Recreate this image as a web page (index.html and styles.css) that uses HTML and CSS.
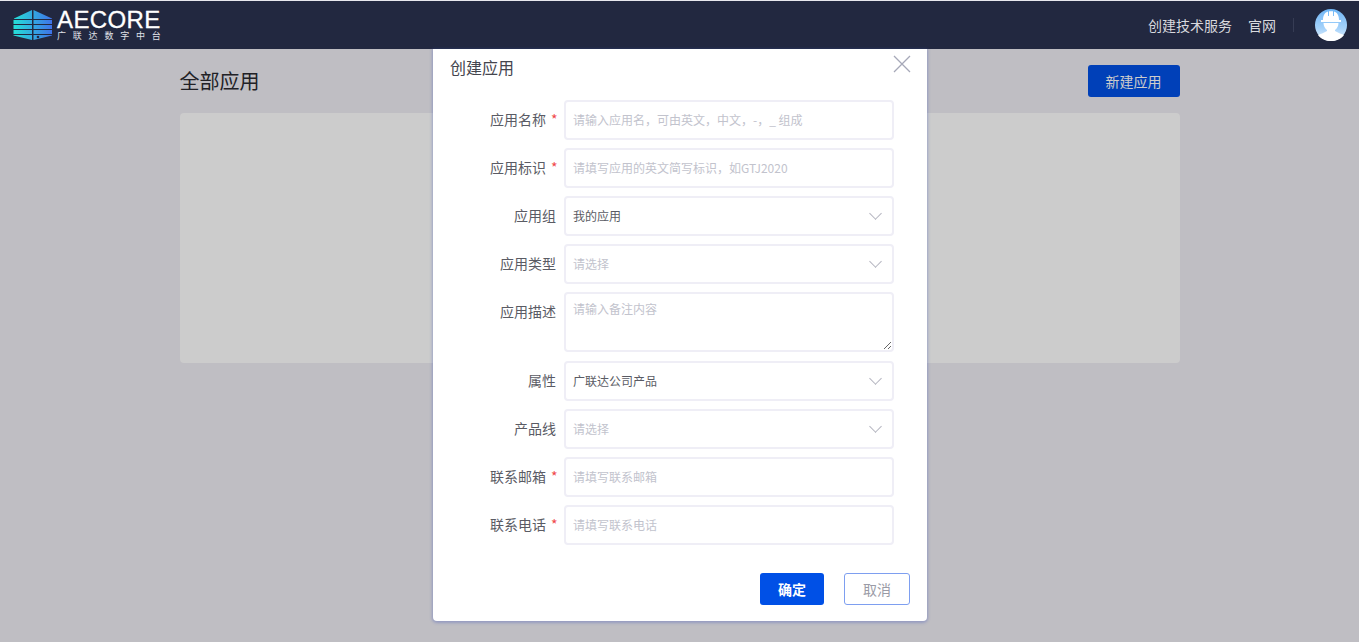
FILE: index.html
```html
<!DOCTYPE html>
<html>
<head>
  <meta charset="utf-8">
  <meta name="viewport" content="width=device-width, initial-scale=1">
  <title>全部应用</title>
  <link rel="stylesheet" href="styles.css">
</head>
<body>
  <header class="topbar">
    <div class="logo">
      <svg class="logo-icon" width="40" height="30" viewBox="0 0 40 30">
        <defs>
          <linearGradient id="logoFill" x1="0" y1="0" x2="1" y2="0">
            <stop offset="0" stop-color="#25dfd8"/>
            <stop offset="1" stop-color="#3f72e8"/>
          </linearGradient>
        </defs>
        <path fill="url(#logoFill)" d="M19 0V9H1V8.500ZM20.500 0 39 8.500V9H20.500ZM0.500 10H19V14H0.500ZM20.500 10H39V14H20.500ZM0.500 15H19V19H0.500ZM20.500 15H39V19H20.500ZM0.500 20H19V24H0.500ZM20.500 20H39V24H20.500ZM0.500 25H19V30L0.500 25.500ZM20.500 25H39V25.500L20.500 30Z"/>
        <circle cx="25" cy="27" r="1.300" fill="#222840"/>
      </svg>
      <div class="logo-text">
        <div class="logo-name">AECORE</div>
        <div class="logo-sub">广联达数字中台</div>
      </div>
    </div>
    <nav class="topnav">
      <a>创建技术服务</a>
      <a>官网</a>
      <span class="topnav-sep"></span>
      <svg class="avatar" width="32" height="32" viewBox="0 0 32 32">
        <defs>
          <linearGradient id="avatarFill" x1="0" y1="0" x2="0" y2="1">
            <stop offset="0" stop-color="#6fb6f6"/>
            <stop offset="0.6" stop-color="#a5d2fa"/>
            <stop offset="1" stop-color="#e4f1fd"/>
          </linearGradient>
        </defs>
        <circle cx="16" cy="16" r="16" fill="url(#avatarFill)"/>
        <path fill="#fff" d="M8 11C8 6 10 3.500 13 2.500V7H14V2.200H18V7H19V2.500C22 3.500 24 6 24 11H26V13H6V11Z"/>
        <path fill="#fff" d="M8.500 14H23.500C23.500 17 22 19.500 20 21V22C23 24 27 25 29 26C26 30 21 32 16 32S6 30 3 26C5 25 9 24 12 22V21C10 19.500 8.500 17 8.500 14Z"/>
      </svg>
    </nav>
  </header>

  <main class="content">
    <div class="content-head">
      <h1>全部应用</h1>
      <button class="new-button">新建应用</button>
    </div>
    <div class="app-list"></div>
  </main>

  <div class="mask">
    <div class="dialog">
      <div class="dialog-head">
        <span class="dialog-title">创建应用</span>
        <svg class="dialog-close" width="18" height="18" viewBox="0 0 18 18">
          <path d="M1 1 17 17M17 1 1 17" stroke="#a6a8b8" stroke-width="1.300" fill="none"/>
        </svg>
      </div>
      <form class="form">
        <div class="form-row">
          <label class="required">应用名称</label>
          <input class="field" placeholder="请输入应用名，可由英文，中文，-，_ 组成">
        </div>
        <div class="form-row">
          <label class="required">应用标识</label>
          <input class="field" placeholder="请填写应用的英文简写标识，如GTJ2020">
        </div>
        <div class="form-row">
          <label>应用组</label>
          <div class="field select">我的应用</div>
        </div>
        <div class="form-row">
          <label>应用类型</label>
          <div class="field select empty">请选择</div>
        </div>
        <div class="form-row">
          <label>应用描述</label>
          <textarea class="field area" placeholder="请输入备注内容"></textarea>
        </div>
        <div class="form-row">
          <label>属性</label>
          <div class="field select">广联达公司产品</div>
        </div>
        <div class="form-row">
          <label>产品线</label>
          <div class="field select empty">请选择</div>
        </div>
        <div class="form-row">
          <label class="required">联系邮箱</label>
          <input class="field" placeholder="请填写联系邮箱">
        </div>
        <div class="form-row">
          <label class="required">联系电话</label>
          <input class="field" placeholder="请填写联系电话">
        </div>
      </form>
      <div class="dialog-foot">
        <button class="ok-button">确定</button>
        <button class="cancel-button">取消</button>
      </div>
    </div>
  </div>
</body>
</html>
```

FILE: styles.css
```css
* {
  box-sizing: border-box;
}
html, body {
  height: 100%;
}
body {
  margin: 0;
  position: relative;
  overflow: hidden;
  background: #efeef4;
  font-family: "Noto Sans CJK SC", "Liberation Sans", sans-serif;
}
.topbar {
  height: 49px;
  border-top: 1px solid #e8e8ee;
  background: #222840;
  display: flex;
  align-items: center;
  justify-content: space-between;
  padding: 0 12px 0 13px;
}
.logo {
  display: flex;
  align-items: center;
  gap: 4px;
}
.logo-text {
  color: #fff;
  width: 106px;
}
.logo-name {
  font-family: "Liberation Sans", sans-serif;
  font-size: 24px;
  line-height: 20px;
  letter-spacing: 0.4px;
  -webkit-text-stroke: 0.3px #fff;
}
.logo-sub {
  font-size: 9px;
  line-height: 11px;
  letter-spacing: 6.8px;
  white-space: nowrap;
  color: #e0e2e8;
}
.topnav {
  display: flex;
  align-items: center;
  font-size: 14px;
  color: #d8d9de;
}
.topnav a {
  margin-right: 16px;
}
.topnav-sep {
  width: 1px;
  height: 14px;
  background: #363c54;
  margin-left: 1px;
  margin-right: 21px;
}
.content {
  width: 1000px;
  margin: 0 auto;
}
.content-head {
  height: 64px;
  display: flex;
  align-items: center;
  justify-content: space-between;
}
.content-head h1 {
  margin: 0 0 2px;
  font-size: 20px;
  font-weight: 400;
  color: #2a2a30;
}
.new-button {
  width: 92px;
  height: 32px;
  border: 0;
  border-radius: 3px;
  background: #0050e6;
  color: #fff;
  font: inherit;
  font-size: 14px;
}
.app-list {
  height: 250px;
  border-radius: 4px;
  background: #fff;
}
.mask {
  position: absolute;
  top: 49px;
  left: 0;
  right: 0;
  bottom: 0;
  background: rgba(0, 0, 0, 0.2);
  display: flex;
  justify-content: center;
  padding-left: 1px;
}
.dialog {
  width: 494px;
  height: 572px;
  background: #fff;
  border-radius: 0 0 4px 4px;
  box-shadow: 0 1px 3px 1px rgba(70, 90, 190, 0.35);
  display: flex;
  flex-direction: column;
}
.dialog-head {
  height: 51px;
  display: flex;
  justify-content: space-between;
  padding: 6px 16px 0 17px;
}
.dialog-title {
  font-size: 16px;
  line-height: 24px;
  color: #44454e;
}
.form {
  display: flex;
  flex-direction: column;
  gap: 8px;
  padding-right: 32px;
}
.form-row {
  display: flex;
  align-items: flex-start;
}
.form-row label {
  width: 123px;
  margin-right: 8px;
  text-align: right;
  font-size: 14px;
  line-height: 38px;
  color: #5a5b64;
  flex: none;
}
.form-row label.required::after {
  content: "*";
  display: inline-block;
  width: 5px;
  color: #f0484a;
  margin-left: 5px;
}
.field {
  width: 330px;
  height: 40px;
  border: 2px solid #efeef6;
  border-radius: 4px;
  padding: 0 7px 2px;
  background: #fff;
  font-family: inherit;
  font-size: 12px;
  color: #5a5b64;
  outline: none;
}
.field::placeholder {
  color: #c2c3cd;
}
.area {
  display: block;
  height: 60px;
  padding-top: 6px;
  margin-bottom: 1px;
}
.select {
  position: relative;
  line-height: 36px;
}
.select.empty {
  color: #c2c3cd;
}
.select::after {
  content: "";
  position: absolute;
  right: 12px;
  top: 11px;
  width: 8px;
  height: 8px;
  border-right: 1px solid #b4b5c0;
  border-bottom: 1px solid #b4b5c0;
  transform: rotate(45deg);
}
.dialog-foot {
  display: flex;
  justify-content: flex-end;
  gap: 20px;
  padding: 28px 17px 0 0;
}
.ok-button,
.cancel-button {
  height: 32px;
  border-radius: 3px;
  font: inherit;
  font-size: 14px;
}
.ok-button {
  width: 64px;
  border: 0;
  background: #0050e6;
  color: #fff;
  font-weight: 700;
}
.cancel-button {
  width: 66px;
  border: 1px solid #7e9ff0;
  background: #fff;
  color: #9a9ba6;
}
```
